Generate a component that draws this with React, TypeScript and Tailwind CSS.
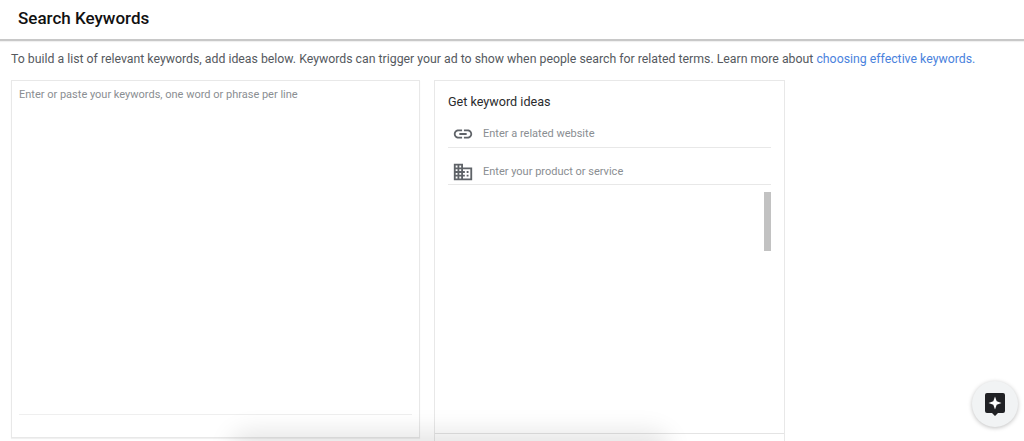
import React from "react";

function LinkIcon() {
  return (
    <svg viewBox="0 0 24 24" className="h-[22px] w-[22px] fill-[#5f6368]">
      <path d="M3.9 12c0-1.71 1.39-3.1 3.1-3.1h4V7H7c-2.76 0-5 2.24-5 5s2.24 5 5 5h4v-1.9H7c-1.71 0-3.1-1.39-3.1-3.1zM8 13h8v-2H8v2zm9-6h-4v1.9h4c1.71 0 3.1 1.39 3.1 3.1s-1.39 3.1-3.1 3.1h-4V17h4c2.76 0 5-2.24 5-5s-2.24-5-5-5z" />
    </svg>
  );
}

function DomainIcon() {
  return (
    <svg viewBox="0 0 24 24" className="h-[22px] w-[22px] fill-[#5f6368]">
      <path d="M12 7V3H2v18h20V7H12zM6 19H4v-2h2v2zm0-4H4v-2h2v2zm0-4H4V9h2v2zm0-4H4V5h2v2zm4 12H8v-2h2v2zm0-4H8v-2h2v2zm0-4H8V9h2v2zm0-4H8V5h2v2zm10 12h-8v-2h2v-2h-2v-2h2v-2h-2V9h8v10zm-2-8h-2v2h2v-2zm0 4h-2v2h2v-2z" />
    </svg>
  );
}

function FeedbackIcon() {
  return (
    <svg viewBox="0 0 20 23" className="h-[23px] w-[20px]">
      <path
        fill="#202124"
        d="M2 0h16a2 2 0 0 1 2 2v16a2 2 0 0 1-2 2h-5l-3 3-3-3H2a2 2 0 0 1-2-2V2a2 2 0 0 1 2-2z"
      />
      <path fill="#fff" d="M10 3.5l1.7 4.8 4.8 1.7-4.8 1.7L10 16.5l-1.7-4.8L3.5 10l4.8-1.7z" />
    </svg>
  );
}

function IdeaRow({ icon, label }: { icon: React.ReactNode; label: string }) {
  return (
    <div className="flex h-[37.5px] items-center border-b border-[#e8e8e8] pt-[12px]">
      <div className="flex w-[35px] justify-center pr-[6px]">{icon}</div>
      <span className="text-[11px] text-[#8a8e92]">{label}</span>
    </div>
  );
}

export default function App() {
  return (
    <div className="relative h-[441px] w-[1024px] overflow-hidden bg-white font-['Roboto',sans-serif]">
      <header className="flex h-[41px] items-center border-b-2 border-[#c8c8c8] pl-[18px] pb-[2px] shadow-[0_1px_1px_rgba(0,0,0,0.06)]">
        <h1 className="text-[17px] font-medium text-[#111]">Search Keywords</h1>
      </header>

      <p className="ml-[11px] mt-[10px] h-[29px] whitespace-nowrap text-[12.3px] leading-[16px] text-[#55595e]">
        To build a list of relevant keywords, add ideas below. Keywords can trigger your ad to show when people search
        for related terms. Learn more about <a className="text-[#4a82dd]">choosing effective keywords.</a>
      </p>

      <div className="ml-[11px] flex items-start gap-[14px]">
        <div className="flex h-[358px] w-[409px] flex-col border border-[#e8e8e8] px-[7px] pb-[22px] pt-[6px] shadow-[0_1px_1px_rgba(0,0,0,0.06)]">
          <div className="flex-1 border-b border-[#efefef] text-[11px] leading-[15px] text-[#8a8e92]">
            Enter or paste your keywords, one word or phrase per line
          </div>
        </div>

        <div className="flex h-[361px] w-[351px] flex-col border border-b-0 border-[#e8e8e8] pt-[13px]">
          <div className="flex-1 px-[13px]">
            <h2 className="text-[12.6px] leading-[16px] text-[#2a2b2e]">Get keyword ideas</h2>
            <IdeaRow icon={<LinkIcon />} label="Enter a related website" />
            <IdeaRow icon={<DomainIcon />} label="Enter your product or service" />
            <div className="ml-auto mt-[7px] h-[59px] w-[7px] bg-[#c2c2c2]" />
          </div>
          <div className="h-[8px] border-t border-[#e4e4e4]" />
        </div>
      </div>

      {/* Schatten am unteren Rand */}
      <div className="absolute left-[240px] top-[447px] h-[20px] w-[420px] rounded-full shadow-[0_-6px_24px_10px_rgba(0,0,0,0.1)]" />

      <button
        type="button"
        className="absolute left-[972px] top-[381px] flex h-[46px] w-[46px] items-center justify-center rounded-full bg-[#f1f3f4] shadow-[0_1px_4px_rgba(0,0,0,0.25)]"
      >
        <FeedbackIcon />
      </button>
    </div>
  );
}
